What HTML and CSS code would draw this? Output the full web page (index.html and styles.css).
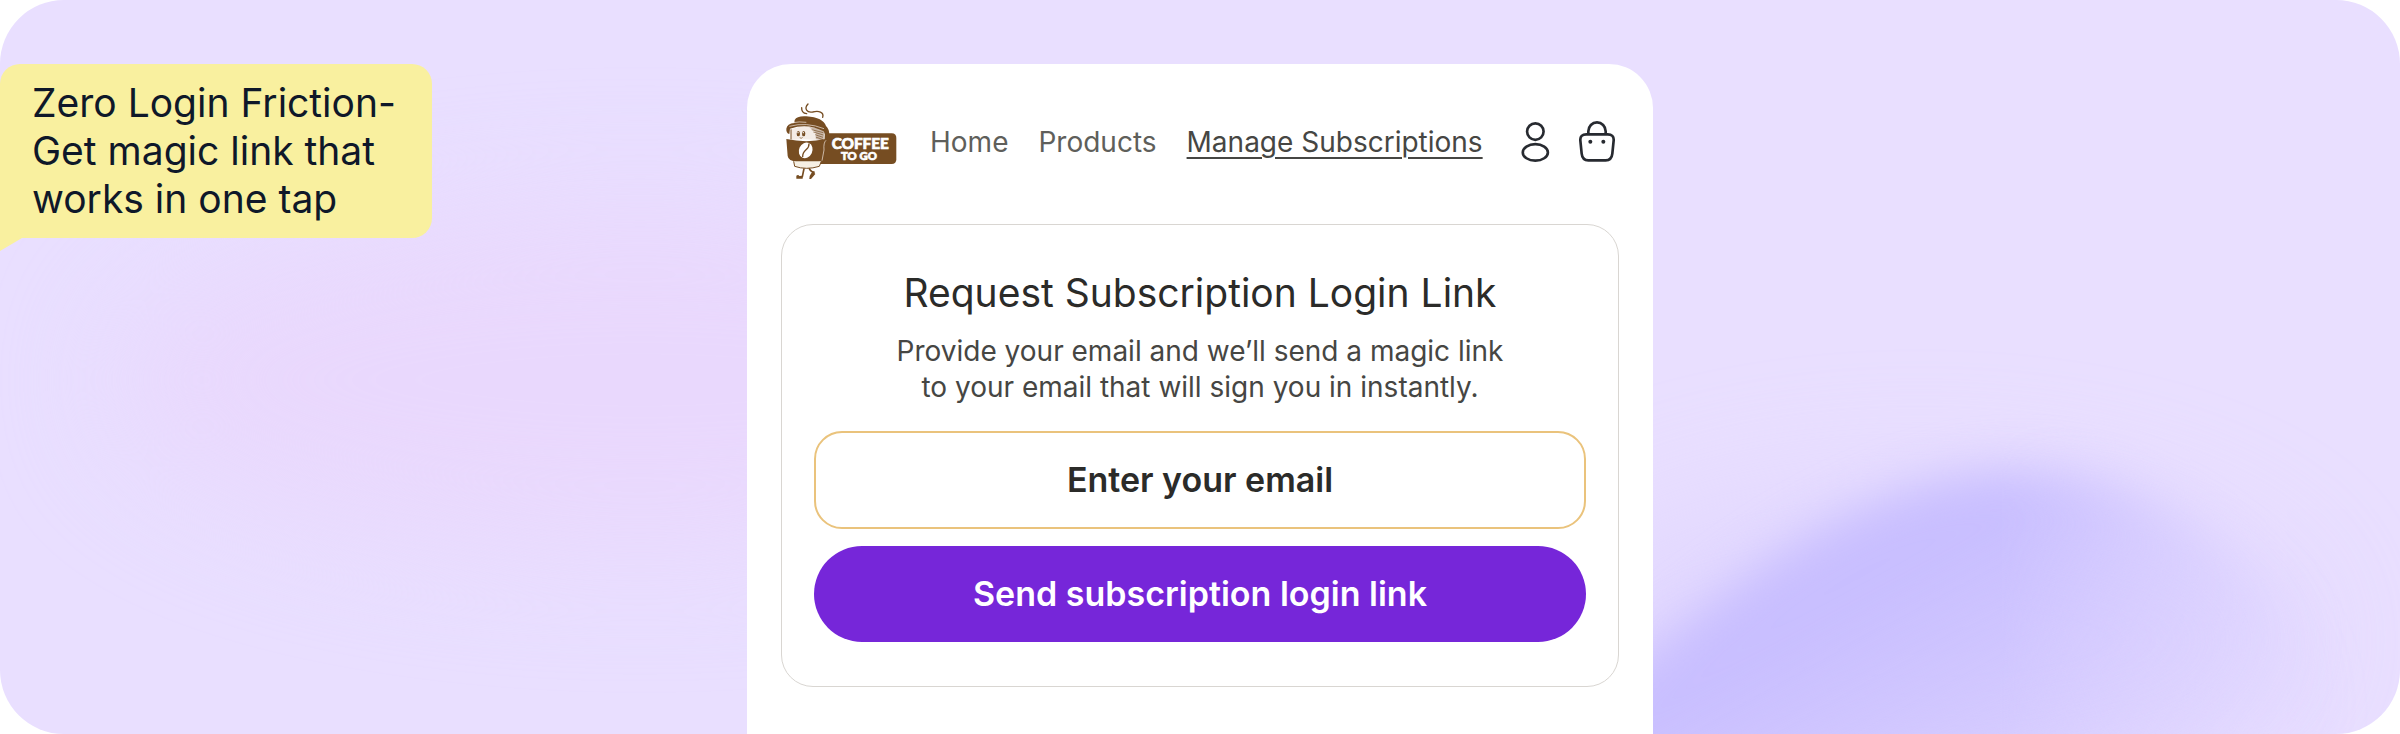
FILE: index.html
```
<!DOCTYPE html>
<html lang="en">
<head>
    <meta charset="UTF-8">
    <meta name="viewport" content="width=device-width, initial-scale=1.0">
    <title>Coffee To Go - Manage Subscriptions</title>
    <link rel="stylesheet" href="styles.css">
</head>
<body>
    <main class="hero">
        <svg class="backdrop" viewBox="0 0 2400 734" preserveAspectRatio="none" color-interpolation-filters="sRGB" aria-hidden="true">
            <defs>
                <linearGradient id="blobFill" gradientUnits="userSpaceOnUse" x1="1870" y1="590" x2="2060" y2="940">
                    <stop offset="0" stop-color="#c8beff"/>
                    <stop offset="1" stop-color="#c8beff" stop-opacity="0"/>
                </linearGradient>
                <linearGradient id="fadeFill" gradientUnits="userSpaceOnUse" x1="2000" y1="0" x2="2380" y2="0">
                    <stop offset="0" stop-color="#fff"/>
                    <stop offset="1" stop-color="#000"/>
                </linearGradient>
                <mask id="blobFade" maskUnits="userSpaceOnUse" x="0" y="0" width="2400" height="900" color-interpolation="sRGB">
                    <rect width="2400" height="900" fill="url(#fadeFill)"/>
                </mask>
                <filter id="soft" x="-30%" y="-30%" width="160%" height="160%">
                    <feGaussianBlur stdDeviation="24"/>
                </filter>
                <filter id="wide" x="-50%" y="-100%" width="200%" height="300%">
                    <feGaussianBlur stdDeviation="60"/>
                </filter>
            </defs>
            <ellipse cx="640" cy="380" rx="520" ry="170" fill="#e9d8fd" filter="url(#wide)"/>
            <ellipse cx="1920" cy="640" rx="390" ry="160" fill="#ddd3ff" opacity="0.6" filter="url(#wide)"/>
            <g mask="url(#blobFade)">
                <path d="M1500 780 C1600 690 1660 640 1727 590 C1820 520 1920 470 2020 470 C2130 470 2210 520 2280 590 C2350 660 2390 740 2400 900 L1500 900 Z" fill="url(#blobFill)" filter="url(#soft)"/>
            </g>
        </svg>

        <aside class="bubble">Zero Login Friction-<br>Get magic link that<br>works in one tap</aside>

        <section class="store">
            <header class="store-header">
                <a class="logo" href="#" aria-label="Coffee To Go">
                    <svg viewBox="48 39 336 231" width="112" height="77">
                        <!-- sign -->
                        <path d="M160 130 H368 Q382 130 382 144 V208 Q382 222 368 222 H150 Z" fill="#764d22"/>
                        <text class="logo-text" x="188" y="177" font-size="46">COFFEE</text>
                        <text class="logo-text" x="216" y="210" font-size="34">TO GO</text>
                        <!-- steam -->
                        <g fill="none" stroke="#764d22" stroke-width="4" stroke-linecap="round">
                            <path d="M98 53 Q97 69 113 71"/>
                            <path d="M117 42 C104 56 114 69 131 66 C148 62 166 65 161 82"/>
                        </g>
                        <!-- legs -->
                        <g fill="none" stroke="#764d22" stroke-width="5" stroke-linecap="round" stroke-linejoin="round">
                            <path d="M106 231 L100 260"/>
                            <path d="M119 231 Q124 246 135 246 L126 261"/>
                        </g>
                        <path d="M82 257 Q88 253 91 258 L101 257 V266 H82 Z" fill="#764d22"/>
                        <path d="M131 243 L139 252 L126 267 H121 L122 258 Z" fill="#764d22"/>
                        <!-- cup -->
                        <path d="M60 120 Q64 146 71 150 L78 229 Q112 244 151 225 L166 150 L168 118 Q110 92 60 120 Z" fill="#fff"/>
                        <path d="M66 118 Q112 100 166 118 L166 154 Q112 144 66 150 Z" fill="#f4ece6"/>
                        <path d="M120 112 Q150 112 165 120 L164 152 L140 147 Q148 126 120 112 Z" fill="#c9b7a8"/>
                        <path d="M128 119 L163 128 M133 126 L163 135 M138 134 L162 142 M140 141 L162 149" stroke="#764d22" stroke-width="2"/>
                        <path d="M66 118 V148" stroke="#764d22" stroke-width="3"/>
                        <ellipse cx="88" cy="131" rx="5" ry="8" fill="#764d22"/>
                        <ellipse cx="104" cy="131" rx="5" ry="8" fill="#764d22"/>
                        <circle cx="87" cy="128" r="2" fill="#fff"/>
                        <circle cx="103" cy="128" r="2" fill="#fff"/>
                        <path d="M92 143 Q97 147 101 142" fill="none" stroke="#764d22" stroke-width="2"/>
                        <!-- lid -->
                        <path d="M77 90 Q84 77 112 79 Q163 83 171 108 Q181 117 181 135 Q176 147 170 148 Q169 132 164 124 Q116 98 63 116 L61 132 Q51 129 52 116 Q54 101 76 99 Z" fill="#764d22"/>
                        <path d="M61 109 Q112 95 165 116" fill="none" stroke="#f4ece6" stroke-width="2"/>
                        <path d="M72 98 Q90 94 112 97" fill="none" stroke="#f4ece6" stroke-width="2"/>
                        <!-- sleeve -->
                        <path d="M52 147 Q112 160 170 147 L176 148 L162 213 Q108 228 64 210 Q57 206 56 198 Z" fill="#764d22"/>
                        <path d="M171 151 Q163 158 165 180 L159 212" fill="none" stroke="#f4ece6" stroke-width="2"/>
                        <path d="M74 214 L77 229 Q112 241 151 229 L157 214" fill="#f6f0e4" stroke="#764d22" stroke-width="3"/>
                        <!-- bean -->
                        <ellipse cx="110" cy="181" rx="20" ry="24" transform="rotate(25 110 181)" fill="#fff"/>
                        <path d="M120 160 C122 182 100 177 101 201" fill="none" stroke="#764d22" stroke-width="4"/>
                    </svg>
                </a>
                <nav class="nav">
                    <a href="#">Home</a>
                    <a href="#">Products</a>
                    <a class="active" href="#">Manage Subscriptions</a>
                </nav>
                <div class="actions">
                    <a href="#" aria-label="Account">
                        <svg viewBox="66 35 87 121" width="29" height="40" fill="none" stroke="#272a30" stroke-width="8">
                            <circle cx="109" cy="64" r="25"/>
                            <ellipse cx="109" cy="127" rx="38" ry="25"/>
                        </svg>
                    </a>
                    <a href="#" aria-label="Cart">
                        <svg viewBox="240 35 108 123" width="36" height="41" fill="none" stroke="#272a30" stroke-width="8">
                            <path d="M268 75 V66 A26 27 0 0 1 320 66 V75"/>
                            <path d="M262 75 H326 Q345 75 344 93 L340 133 Q338 153 320 153 H268 Q250 153 248 133 L244 93 Q243 75 262 75 Z"/>
                            <circle cx="274" cy="97" r="6" fill="#272a30" stroke="none"/>
                            <circle cx="313" cy="97" r="6" fill="#272a30" stroke="none"/>
                        </svg>
                    </a>
                </div>
            </header>

            <form class="login-form" id="loginForm">
                <h1>Request Subscription Login Link</h1>
                <p>Provide your email and we’ll send a magic link<br>to your email that will sign you in instantly.</p>
                <input type="email" id="email" name="email" placeholder="Enter your email" aria-label="Email" required>
                <button type="submit">Send subscription login link</button>
            </form>
        </section>
    </main>
</body>
</html>
```
FILE: styles.css
```
* {
    box-sizing: border-box;
}
body {
    margin: 0;
    background: #fff;
    font-family: Inter, "Liberation Sans", sans-serif;
    color: #2b2b29;
}
a {
    color: inherit;
    text-decoration: none;
}
svg {
    display: block;
}
.hero {
    position: relative;
    display: grid;
    grid-template-columns: 1fr minmax(0, 906px) 1fr;
    align-items: start;
    min-height: 100vh;
    padding-top: 64px;
    background: #e9dfff;
    border-radius: 64px;
    overflow: hidden;
}
.backdrop {
    position: absolute;
    inset: 0;
    width: 100%;
    height: 100%;
}
.bubble {
    position: relative;
    justify-self: start;
    padding: 15px 36px 15px 32px;
    background: #f9f09f;
    border-radius: 20px 20px 20px 0;
    font-size: 39px;
    line-height: 48px;
    color: #0f1829;
}
/* speech tail */
.bubble::after {
    content: "";
    position: absolute;
    top: 100%;
    left: 0;
    width: 22px;
    height: 13px;
    background: #f9f09f;
    clip-path: polygon(0 0, 100% 0, 0 100%);
}
.store {
    position: relative;
    align-self: stretch;
    padding: 39px 34px 44px;
    background: #fff;
    border-radius: 44px 44px 0 0;
}
.store-header {
    display: flex;
    align-items: center;
    padding: 0 4px;
    margin-bottom: 44px;
}
.logo-text {
    font-family: Lato, sans-serif;
    font-weight: 900;
    fill: #fff;
    stroke: #fff;
    stroke-width: 2px;
}
.nav {
    display: flex;
    gap: 30px;
    margin-left: 33px;
    font-size: 28px;
    line-height: 36px;
    color: #5f5f5b;
}
.nav .active {
    color: #464643;
    text-decoration: underline;
    text-decoration-thickness: 2px;
    text-underline-offset: 5px;
}
.actions {
    display: flex;
    align-items: center;
    gap: 29px;
    margin-left: auto;
}
.login-form {
    display: flex;
    flex-direction: column;
    padding: 44px 32px;
    border: 1px solid #d9d6d2;
    border-radius: 32px;
    text-align: center;
}
.login-form h1 {
    margin: 0 0 16px;
    font-size: 39px;
    line-height: 48px;
    font-weight: 400;
}
.login-form p {
    margin: 0 0 26px;
    font-size: 28px;
    line-height: 36px;
    color: #464643;
}
.login-form input,
.login-form button {
    width: 100%;
    font-family: inherit;
    font-size: 34px;
    line-height: 40px;
    font-weight: 600;
    text-align: center;
}
.login-form input {
    padding: 27px 32px;
    margin-bottom: 17px;
    border: 2px solid #eac37c;
    border-radius: 28px;
    background: #fff;
    color: #2b2b29;
}
.login-form input::placeholder {
    color: #2b2b29;
    opacity: 1;
}
.login-form button {
    padding: 28px 32px;
    border: none;
    border-radius: 48px;
    background: #7626d9;
    color: #fff;
    cursor: pointer;
}
```
